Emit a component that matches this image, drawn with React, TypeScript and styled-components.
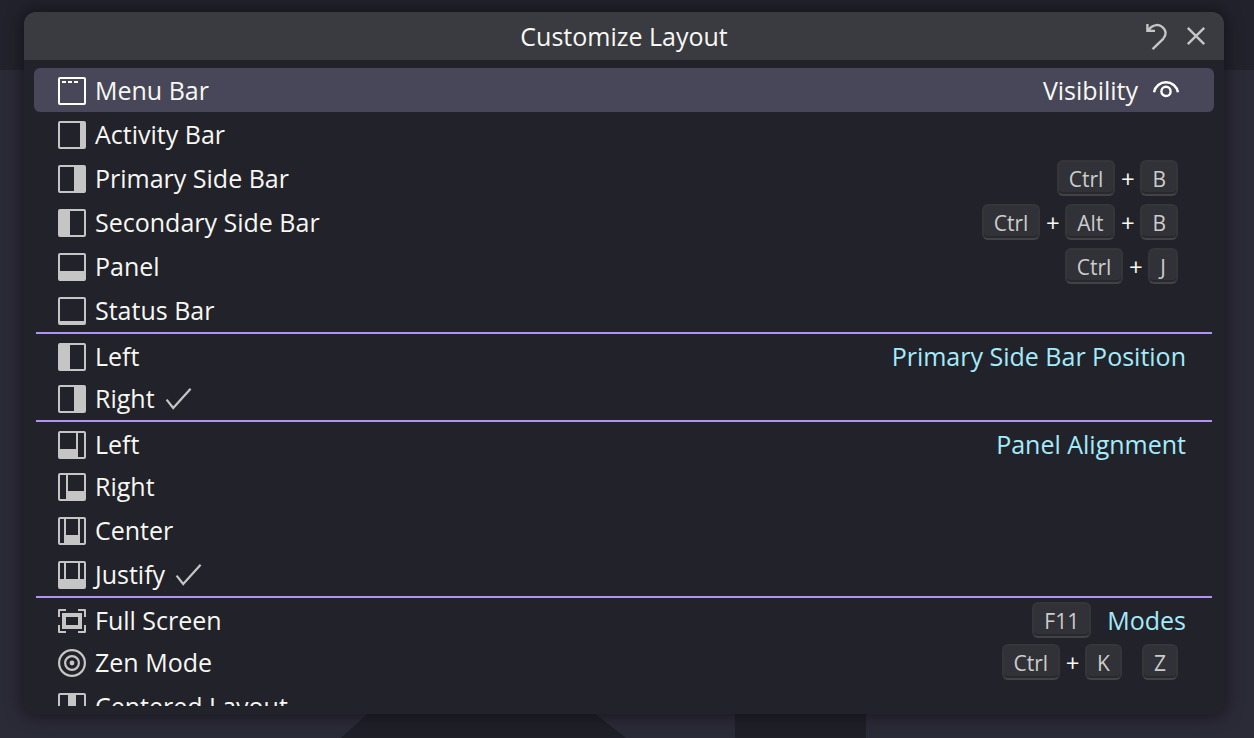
import React from "react";
import styled, { createGlobalStyle, css } from "styled-components";

const GlobalStyle = createGlobalStyle`
  *, *::before, *::after { box-sizing: border-box; }
  body {
    margin: 0;
    background: #2b2a37;
    color: #f8f8f2;
    font-family: "Open Sans", "Noto Sans", sans-serif;
    font-size: 25px;
    line-height: 36px;
  }
`;

const Workbench = styled.div`
  position: relative;
  display: flex;
  height: 100vh;
  padding: 12px 30px 24px 24px;
  overflow: hidden;
  background: linear-gradient(#22222c 70px, #2b2a37 70px);
`;

const Backdrop = styled.svg`
  position: absolute;
  left: 0;
  bottom: 0;
`;

const Shadow = styled.div`
  position: relative;
  display: flex;
  flex: 1;
  min-width: 0;
  border-radius: 12px;
  box-shadow: 0 0 16px 4px rgba(0, 0, 0, 0.36);
`;

const Dialog = styled.section`
  flex: 1;
  min-width: 0;
  display: flex;
  flex-direction: column;
  padding-bottom: 8px;
  border-radius: 12px;
  overflow: hidden;
  background: #22222a;
`;

const TitleBar = styled.header`
  flex: none;
  display: grid;
  grid-template-columns: 1fr auto 1fr;
  align-items: center;
  height: 48px;
  padding: 0 12px;
  background: #3a3a41;
`;

const Title = styled.h1`
  grid-column: 2;
  margin: 0;
  font-size: 25px;
  font-weight: 400;
  line-height: 36px;
`;

const TitleActions = styled.div`
  display: flex;
  justify-content: flex-end;
  gap: 8px;
`;

const IconButton = styled.button`
  display: flex;
  align-items: center;
  justify-content: center;
  width: 32px;
  height: 32px;
  padding: 0;
  border: 0;
  background: none;
  color: inherit;
  cursor: pointer;
`;

const TitleButton = styled(IconButton)`
  color: #c5c5c5;
`;

const List = styled.ul`
  flex: 1;
  min-height: 0;
  margin: 8px 0 0;
  padding: 0 10px;
  overflow: hidden;
  list-style: none;
`;

const Row = styled.li<{ $active?: boolean; $separated?: boolean }>`
  display: flex;
  align-items: center;
  height: 44px;
  padding: 0 28px 0 24px;
  color: #c5c5c5;
  ${(p) =>
    p.$active &&
    css`
      padding-right: 32px;
      border-radius: 6px;
      background: #474759;
      color: #ffffff;
    `}
  ${(p) =>
    p.$separated &&
    css`
      margin: 0 2px;
      padding: 2px 26px 0 22px;
      border-top: 2px solid #b392f5;
    `}
`;

const ItemButton = styled.button`
  flex: 1;
  display: flex;
  align-items: center;
  padding: 2px 0 0;
  border: 0;
  background: none;
  color: inherit;
  font: inherit;
  text-align: left;
  cursor: pointer;
`;

const ItemLabel = styled.span`
  margin: 0 10px 0 9px;
  padding-bottom: 2px;
  color: #f8f8f2;
`;

const Group = styled.span<{ $active?: boolean; $afterKeys?: boolean }>`
  margin-left: ${(p) => (p.$afterKeys ? 16 : 0)}px;
  margin-right: ${(p) => (p.$active ? 12 : 0)}px;
  color: ${(p) => (p.$active ? "#f8f8f2" : "#a4ebfb")};
`;

const Keys = styled.span<{ $alone?: boolean }>`
  display: flex;
  align-items: center;
  margin-right: ${(p) => (p.$alone ? 8 : 0)}px;
`;

const Plus = styled.span`
  width: 25px;
  padding-top: 2px;
  font-size: 24px;
  text-align: center;
  color: #f8f8f2;
`;

const ChordGap = styled.span`
  width: 20px;
`;

const Key = styled.kbd`
  height: 36px;
  padding: 2px 10px 0;
  border: 2px solid #35353a;
  border-bottom-color: #434347;
  border-radius: 6px;
  background: #313138;
  box-shadow: inset 0 -2px 0 #28282d;
  color: #cccccc;
  font-family: inherit;
  font-size: 21px;
  line-height: 30px;
`;

const OUTER = "M2 0H26Q28 0 28 2V26Q28 28 26 28H2Q0 28 0 26V2Q0 0 2 0Z";

const hole = (x1: number, y1: number, x2: number, y2: number) =>
  `M${x1} ${y1}V${y2}H${x2}V${y1}Z`;

const layouts: Record<string, string> = {
  menu: hole(2, 2, 26, 26) + "M4 4H8V6H4ZM10 4H14V6H10ZM16 4H20V6H16Z",
  activity: hole(2, 2, 22, 26),
  sideRight: hole(2, 2, 16, 26),
  sideLeft: hole(12, 2, 26, 26),
  panel: hole(2, 2, 26, 18),
  status: hole(2, 2, 26, 24),
  alignLeft: hole(2, 2, 18, 18) + hole(20, 2, 26, 26),
  alignRight: hole(2, 2, 8, 26) + hole(10, 2, 26, 18),
  alignCenter: hole(2, 2, 6, 26) + hole(8, 2, 20, 18) + hole(22, 2, 26, 26),
  alignJustify: hole(2, 2, 6, 18) + hole(8, 2, 20, 18) + hole(22, 2, 26, 18),
  centered: hole(2, 2, 10, 26) + hole(18, 2, 26, 26),
};

function ItemIcon({ name }: { name: string }) {
  return (
    <svg width="28" height="28" viewBox="0 0 28 28" fill="currentColor" aria-hidden="true">
      {name === "fullscreen" ? (
        <path
          fillRule="evenodd"
          d="M0 3Q0 2 1 2H8V4H2V10H0ZM20 2H27Q28 2 28 3V10H26V4H20ZM0 18H2V24H8V26H1Q0 26 0 25ZM26 18H28V25Q28 26 27 26H20V24H26ZM4 6H24V22H4ZM8 10V18H20V10Z"
        />
      ) : name === "zen" ? (
        <g fill="none" stroke="currentColor" strokeWidth="2.2">
          <circle cx="14" cy="14" r="12.9" />
          <circle cx="14" cy="14" r="6.9" />
          <circle cx="14" cy="14" r="2.4" fill="currentColor" stroke="none" />
        </g>
      ) : (
        <path fillRule="evenodd" d={OUTER + layouts[name]} />
      )}
    </svg>
  );
}

function CheckIcon() {
  return (
    <svg width="28" height="28" viewBox="0 0 28 28" fill="none" stroke="currentColor" strokeWidth="2.2" role="img" aria-label="Selected">
      <path d="M1.600 14.600L8.200 23L25.600 3.800" />
    </svg>
  );
}

function UndoIcon() {
  return (
    <svg width="32" height="32" viewBox="0 0 32 32" fill="none" stroke="currentColor" strokeWidth="2.4" aria-hidden="true">
      <path d="M7.400 4V10.900H15M7.800 10.600L11.400 7C14 4.800 18.600 4.200 21.800 6.600C26.600 10.200 26.600 15.200 23.200 18.800L12.600 29.200" />
    </svg>
  );
}

function CloseIcon() {
  return (
    <svg width="32" height="32" viewBox="0 0 32 32" fill="none" stroke="currentColor" strokeWidth="2.4" aria-hidden="true">
      <path d="M7.800 7.800L24.200 24.200M24.200 7.800L7.800 24.200" />
    </svg>
  );
}

function EyeIcon() {
  return (
    <svg width="32" height="32" viewBox="0 0 32 32" fill="none" stroke="currentColor" strokeWidth="2.4" aria-hidden="true">
      <path d="M4 18.200C5.200 12.200 10.200 8.200 16 8.200S26.800 12.200 28 18.200" />
      <circle cx="16" cy="17.400" r="4.600" />
    </svg>
  );
}

type Item = {
  icon: string;
  label: string;
  group?: string;
  chords?: string[][];
  active?: boolean;
  separated?: boolean;
  checked?: boolean;
};

const items: Item[] = [
  { icon: "menu", label: "Menu Bar", group: "Visibility", active: true },
  { icon: "activity", label: "Activity Bar" },
  { icon: "sideRight", label: "Primary Side Bar", chords: [["Ctrl", "B"]] },
  { icon: "sideLeft", label: "Secondary Side Bar", chords: [["Ctrl", "Alt", "B"]] },
  { icon: "panel", label: "Panel", chords: [["Ctrl", "J"]] },
  { icon: "status", label: "Status Bar" },
  { icon: "sideLeft", label: "Left", group: "Primary Side Bar Position", separated: true },
  { icon: "sideRight", label: "Right", checked: true },
  { icon: "alignLeft", label: "Left", group: "Panel Alignment", separated: true },
  { icon: "alignRight", label: "Right" },
  { icon: "alignCenter", label: "Center" },
  { icon: "alignJustify", label: "Justify", checked: true },
  { icon: "fullscreen", label: "Full Screen", group: "Modes", chords: [["F11"]], separated: true },
  { icon: "zen", label: "Zen Mode", chords: [["Ctrl", "K"], ["Z"]] },
  { icon: "centered", label: "Centered Layout" },
];

function Keybinding({ chords, alone }: { chords: string[][]; alone: boolean }) {
  return (
    <Keys $alone={alone}>
      {chords.map((chord, c) => (
        <React.Fragment key={c}>
          {c > 0 && <ChordGap />}
          {chord.map((key, k) => (
            <React.Fragment key={key}>
              {k > 0 && <Plus>+</Plus>}
              <Key>{key}</Key>
            </React.Fragment>
          ))}
        </React.Fragment>
      ))}
    </Keys>
  );
}

export default function App() {
  return (
    <Workbench>
      <GlobalStyle />
      <Backdrop width="880" height="32" viewBox="0 0 880 32" fill="#1f1f28" aria-hidden="true">
        <path d="M341 32L376 0H585L626 32ZM735 0H866V32H735Z" />
      </Backdrop>
      <Shadow>
        <Dialog aria-labelledby="layout-title">
          <TitleBar>
            <Title id="layout-title">Customize Layout</Title>
            <TitleActions>
              <TitleButton aria-label="Restore Defaults">
                <UndoIcon />
              </TitleButton>
              <TitleButton aria-label="Close">
                <CloseIcon />
              </TitleButton>
            </TitleActions>
          </TitleBar>
          <List>
            {items.map((item, i) => (
              <Row key={i} $active={item.active} $separated={item.separated}>
                <ItemButton>
                  <ItemIcon name={item.icon} />
                  <ItemLabel>{item.label}</ItemLabel>
                  {item.checked && <CheckIcon />}
                </ItemButton>
                {item.chords && <Keybinding chords={item.chords} alone={!item.group} />}
                {item.group && (
                  <Group $active={item.active} $afterKeys={!!item.chords}>
                    {item.group}
                  </Group>
                )}
                {item.active && (
                  <IconButton aria-label="Toggle Menu Bar visibility">
                    <EyeIcon />
                  </IconButton>
                )}
              </Row>
            ))}
          </List>
        </Dialog>
      </Shadow>
    </Workbench>
  );
}
